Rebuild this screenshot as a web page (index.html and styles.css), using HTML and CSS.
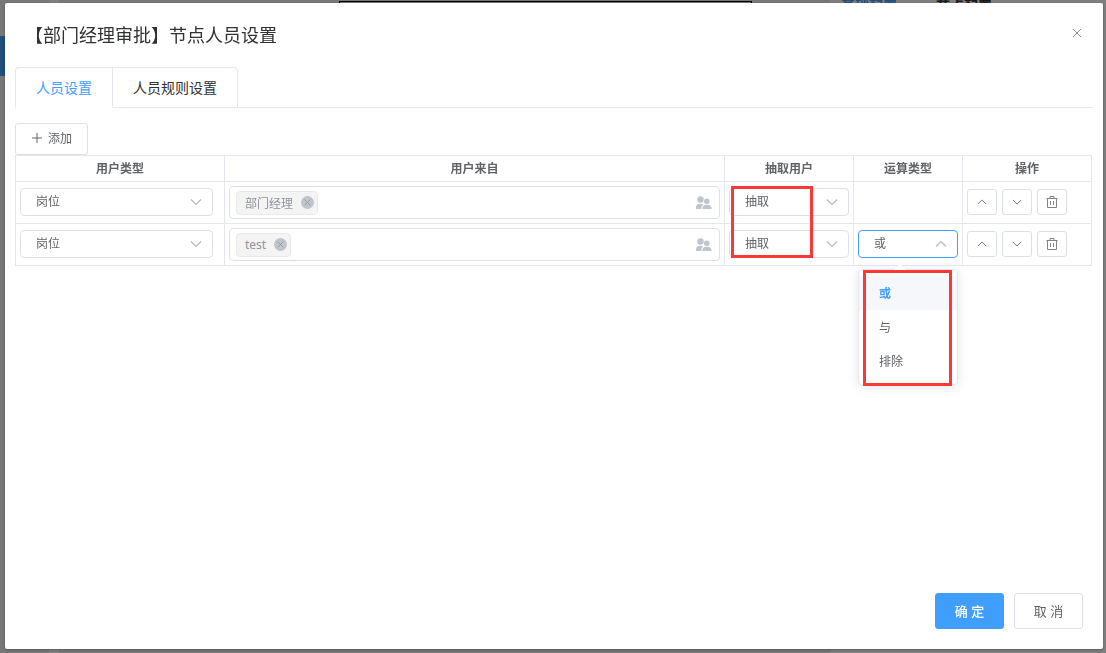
FILE: index.html
```html
<!DOCTYPE html>
<html lang="zh-CN">
<head>
    <meta charset="UTF-8">
    <meta name="viewport" content="width=device-width, initial-scale=1.0">
    <title>节点人员设置</title>
    <link rel="stylesheet" href="styles.css">
</head>
<body>
    <!-- 图标 -->
    <svg class="sprite" aria-hidden="true">
        <symbol id="icon-down" viewBox="0 0 12 12"><path d="M1 3.5l5 5 5-5"/></symbol>
        <symbol id="icon-up" viewBox="0 0 12 12"><path d="M1 8.500l5-5 5 5"/></symbol>
        <symbol id="icon-close" viewBox="0 0 12 12"><path d="M2 2l8 8M10 2l-8 8"/></symbol>
        <symbol id="icon-plus" viewBox="0 0 12 12"><path d="M6 1v10M1 6h10"/></symbol>
        <symbol id="icon-delete" viewBox="0 0 12 12"><path d="M.5 2.500h11M4 2.500v-2h4v2M1.500 2.500v9h9v-9M4.500 5v4M7.500 5v4"/></symbol>
        <symbol id="icon-users" viewBox="0 0 16 14">
            <circle cx="4.500" cy="3.500" r="3.200"/>
            <path d="M0 13v-1.500C0 9 1.500 7.800 4 7.800c1.300 0 2.400.3 3.100 1C5.800 10 5.200 11.300 5.200 13z"/>
            <circle cx="10.800" cy="5.200" r="2.800"/>
            <path d="M6.200 13c0-2.800 1.600-4.300 4.700-4.300s4.800 1.500 4.800 4.300z"/>
        </symbol>
    </svg>

    <!-- 底层页面 -->
    <div class="page">
        <aside class="page-menu"><div class="menu-current"></div></aside>
        <div class="page-gap"></div>
        <main class="page-canvas"><div class="canvas-frame"></div></main>
        <nav class="page-tabs">
            <a href="#" class="current">基础配置</a>
            <a href="#">节点配置</a>
        </nav>
    </div>

    <div class="mask">
        <div class="dialog" role="dialog" aria-labelledby="dialogTitle">
            <header class="dialog-header">
                <h1 id="dialogTitle">【部门经理审批】节点人员设置</h1>
                <button type="button" class="dialog-close" aria-label="关闭"><svg class="icon"><use href="#icon-close"/></svg></button>
            </header>

            <div class="tabs" role="tablist">
                <button type="button" class="tab active" role="tab" aria-selected="true">人员设置</button>
                <button type="button" class="tab" role="tab" aria-selected="false">人员规则设置</button>
            </div>

            <div class="dialog-body">
                <button type="button" class="btn btn-add"><svg class="icon"><use href="#icon-plus"/></svg>添加</button>

                <div class="table-wrapper">
                    <table class="user-table">
                        <colgroup>
                            <col class="col-type">
                            <col>
                            <col class="col-extract">
                            <col class="col-logic">
                            <col class="col-action">
                        </colgroup>
                        <thead>
                            <tr>
                                <th>用户类型</th>
                                <th>用户来自</th>
                                <th>抽取用户</th>
                                <th>运算类型</th>
                                <th>操作</th>
                            </tr>
                        </thead>
                        <tbody>
                            <tr>
                                <td>
                                    <div class="select select-type">
                                        <select aria-label="用户类型"><option>岗位</option></select>
                                        <svg class="icon"><use href="#icon-down"/></svg>
                                    </div>
                                </td>
                                <td>
                                    <div class="tag-box">
                                        <span class="tag">部门经理<button type="button" class="tag-close" aria-label="移除部门经理"><svg class="icon"><use href="#icon-close"/></svg></button></span>
                                        <svg class="icon-users"><use href="#icon-users"/></svg>
                                    </div>
                                </td>
                                <td class="extract-cell">
                                    <div class="select">
                                        <select aria-label="抽取用户"><option>抽取</option></select>
                                        <svg class="icon"><use href="#icon-down"/></svg>
                                    </div>
                                    <div class="mark mark-extract"></div>
                                </td>
                                <td></td>
                                <td>
                                    <div class="actions">
                                        <button type="button" class="btn btn-mini" aria-label="上移"><svg class="icon"><use href="#icon-up"/></svg></button>
                                        <button type="button" class="btn btn-mini" aria-label="下移"><svg class="icon"><use href="#icon-down"/></svg></button>
                                        <button type="button" class="btn btn-mini" aria-label="删除"><svg class="icon icon-delete"><use href="#icon-delete"/></svg></button>
                                    </div>
                                </td>
                            </tr>
                            <tr>
                                <td>
                                    <div class="select select-type">
                                        <select aria-label="用户类型"><option>岗位</option></select>
                                        <svg class="icon"><use href="#icon-down"/></svg>
                                    </div>
                                </td>
                                <td>
                                    <div class="tag-box">
                                        <span class="tag">test<button type="button" class="tag-close" aria-label="移除test"><svg class="icon"><use href="#icon-close"/></svg></button></span>
                                        <svg class="icon-users"><use href="#icon-users"/></svg>
                                    </div>
                                </td>
                                <td>
                                    <div class="select">
                                        <select aria-label="抽取用户"><option>抽取</option></select>
                                        <svg class="icon"><use href="#icon-down"/></svg>
                                    </div>
                                </td>
                                <td>
                                    <div class="select open">
                                        <select aria-label="运算类型"><option>或</option><option>与</option><option>排除</option></select>
                                        <svg class="icon"><use href="#icon-up"/></svg>
                                        <div class="dropdown">
                                            <ul role="listbox">
                                                <li role="option" class="selected" aria-selected="true">或</li>
                                                <li role="option">与</li>
                                                <li role="option">排除</li>
                                            </ul>
                                            <div class="mark mark-logic"></div>
                                        </div>
                                    </div>
                                </td>
                                <td>
                                    <div class="actions">
                                        <button type="button" class="btn btn-mini" aria-label="上移"><svg class="icon"><use href="#icon-up"/></svg></button>
                                        <button type="button" class="btn btn-mini" aria-label="下移"><svg class="icon"><use href="#icon-down"/></svg></button>
                                        <button type="button" class="btn btn-mini" aria-label="删除"><svg class="icon icon-delete"><use href="#icon-delete"/></svg></button>
                                    </div>
                                </td>
                            </tr>
                        </tbody>
                    </table>
                </div>
            </div>

            <footer class="dialog-footer">
                <button type="button" class="btn btn-large btn-primary">确 定</button>
                <button type="button" class="btn btn-large">取 消</button>
            </footer>
        </div>
    </div>
</body>
</html>
```

FILE: styles.css
```css
* {
    box-sizing: border-box;
}

body {
    margin: 0;
    font-family: "Noto Sans", "Noto Sans CJK SC", sans-serif;
    font-size: 12px;
    color: #606266;
    overflow: hidden;
}

button,
select {
    font-family: inherit;
    font-size: 12px;
    color: #606266;
    cursor: pointer;
}

.sprite {
    position: absolute;
    width: 0;
    height: 0;
}

.icon {
    width: 12px;
    height: 12px;
    flex: none;
    fill: none;
    stroke: currentColor;
    stroke-width: 1;
}

/* 底层页面 */
.page {
    display: flex;
    height: 100vh;
    background: #f0f0f0;
}

.page-menu {
    width: 49px;
    padding-top: 36px;
}

.menu-current {
    height: 40px;
    background: #409eff;
}

.page-gap {
    width: 10px;
    background: #fff;
}

.page-canvas {
    flex: 1;
    padding: 1px 78px 0 280px;
}

.canvas-frame {
    height: 300px;
    border: 1px solid #000;
}

.page-tabs {
    width: 276px;
    padding-left: 11px;
    display: flex;
    align-items: flex-start;
    gap: 39px;
    background: #fff;
}

.page-tabs a {
    font-size: 14px;
    font-weight: bold;
    line-height: 12px;
    color: #303133;
    text-decoration: none;
}

.page-tabs a.current {
    color: #409eff;
}

/* 弹窗 */
.mask {
    position: fixed;
    inset: 0;
    display: flex;
    padding: 3px 3px 4px 5px;
    background: rgba(0, 0, 0, 0.5);
}

.dialog {
    flex: 1;
    display: flex;
    flex-direction: column;
    background: #fff;
    border-radius: 2px;
    box-shadow: 0 1px 3px rgba(0, 0, 0, 0.3);
}

.dialog-header {
    display: flex;
    justify-content: space-between;
    align-items: flex-start;
    padding: 20px;
}

.dialog-header h1 {
    margin: 0;
    font-size: 18px;
    font-weight: normal;
    line-height: 24px;
    color: #303133;
}

.dialog-close {
    display: flex;
    padding: 4px 0;
    border: none;
    background: none;
    color: #909399;
}

/* 标签页 */
.tabs {
    display: flex;
    margin: 0 10px;
    border-bottom: 1px solid #e4e7ed;
}

.tab {
    height: 41px;
    margin-bottom: -1px;
    padding: 0 20px 2px;
    border: 1px solid #e4e7ed;
    border-left: none;
    background: #fff;
    font-size: 14px;
    color: #303133;
}

.tab:first-child {
    border-left: 1px solid #e4e7ed;
    border-top-left-radius: 4px;
}

.tab:last-child {
    border-top-right-radius: 4px;
}

.tab.active {
    border-bottom-color: #fff;
    color: #409eff;
}

.dialog-body {
    flex: 1;
    padding: 15px 10px;
}

/* 按钮 */
.btn {
    display: flex;
    align-items: center;
    justify-content: center;
    border: 1px solid #dcdfe6;
    border-radius: 3px;
    background: #fff;
}

.btn-add {
    height: 32px;
    padding: 0 15px 2px;
    gap: 5px;
}

.btn-mini {
    width: 30px;
    height: 26px;
    padding: 0;
}

.btn-mini .icon {
    width: 10px;
    height: 10px;
}

.btn-mini .icon-delete {
    width: 12px;
    height: 12px;
    color: #82848a;
}

.btn-large {
    width: 69px;
    height: 36px;
    padding: 0 0 2px;
    font-size: 13px;
}

.btn-primary {
    border-color: #409eff;
    background: #409eff;
    color: #fff;
    font-weight: 500;
}

/* 表格 */
.table-wrapper {
    padding-right: 1px;
}

.user-table {
    width: 100%;
    table-layout: fixed;
    border-collapse: collapse;
}

.col-type {
    width: 209px;
}

.col-extract,
.col-action {
    width: 129px;
}

.col-logic {
    width: 109px;
}

.user-table th,
.user-table td {
    padding: 4px;
    border: 1px solid #e4e7ed;
}

.user-table th {
    height: 26px;
    padding: 0;
    line-height: 20px;
    font-weight: bold;
}

.user-table td {
    height: 42px;
}

.extract-cell {
    position: relative;
}

/* 下拉选择 */
.select {
    position: relative;
    display: flex;
    align-items: center;
    margin-bottom: 2px;
}

.select-type {
    margin-right: 7px;
}

.select select {
    width: 100%;
    height: 28px;
    padding: 0 15px;
    border: 1px solid #dcdfe6;
    border-radius: 4px;
    background: #fff;
    appearance: none;
}

.select > .icon {
    position: absolute;
    right: 11px;
    color: #b4b8c0;
    stroke-width: 1.2;
    pointer-events: none;
}

.select.open select {
    border-color: #409eff;
}

.dropdown {
    position: absolute;
    top: 39px;
    left: 0;
    z-index: 2;
    width: 100%;
    border: 1px solid #e4e7ed;
    border-radius: 4px;
    background: #fff;
    box-shadow: 0 2px 12px rgba(0, 0, 0, 0.1);
}

.dropdown::before {
    content: "";
    position: absolute;
    top: -6px;
    left: 35px;
    border: 6px solid transparent;
    border-top: none;
    border-bottom-color: #fff;
}

.dropdown ul {
    margin: 0;
    padding: 6px 0;
    list-style: none;
}

.dropdown li {
    height: 34px;
    padding: 0 20px;
    line-height: 36px;
}

.dropdown li.selected {
    background: #f5f7fa;
    color: #409eff;
    font-weight: bold;
}

/* 用户标签 */
.tag-box {
    display: flex;
    align-items: center;
    justify-content: space-between;
    height: 33px;
    padding: 0 7px 0 6px;
    border: 1px solid #dcdfe6;
    border-radius: 4px;
}

.tag {
    display: flex;
    align-items: center;
    gap: 8px;
    height: 24px;
    padding: 0 3px 0 8px;
    border: 1px solid #e9e9eb;
    border-radius: 4px;
    background: #f4f4f5;
    color: #909399;
}

.tag-close {
    display: flex;
    align-items: center;
    justify-content: center;
    width: 13px;
    height: 13px;
    padding: 0;
    border: none;
    border-radius: 50%;
    background: #c0c4cc;
    color: #909399;
}

.tag-close .icon {
    width: 9px;
    height: 9px;
}

.icon-users {
    width: 16px;
    height: 14px;
    fill: #c0c4cc;
}

.actions {
    display: flex;
    gap: 5px;
    margin-bottom: 2px;
}

/* 红色标注框 */
.mark {
    position: absolute;
    border: 3px solid #f93838;
    pointer-events: none;
}

.mark-extract {
    top: 4px;
    left: 6px;
    z-index: 1;
    width: 82px;
    height: 72px;
}

.mark-logic {
    top: 0;
    left: 4px;
    right: 5px;
    height: 116px;
}

.dialog-footer {
    display: flex;
    justify-content: flex-end;
    gap: 10px;
    padding: 10px 20px 20px;
}
```
